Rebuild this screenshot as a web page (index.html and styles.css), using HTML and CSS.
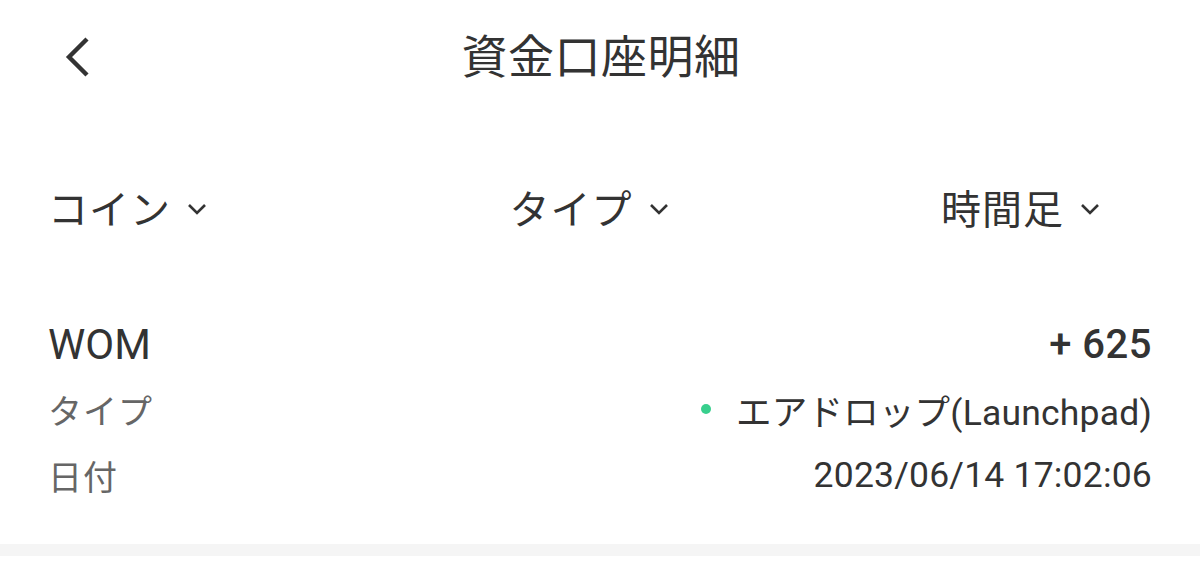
FILE: index.html
```html
<!DOCTYPE html>
<html>
<head>
    <meta charset="utf-8">
    <meta name="viewport" content="width=device-width, initial-scale=1">
    <title>資金口座明細</title>
    <link rel="stylesheet" href="styles.css">
</head>
<body>
    <div class="header">
        <button class="back" aria-label="戻る">
            <svg width="28" height="42" viewBox="0 0 28 42">
                <polyline points="23,3 5,21 23,39" fill="none" stroke="#333" stroke-width="4.4" stroke-linejoin="miter"/>
            </svg>
        </button>
        <div class="title">資金口座明細</div>
        <div></div>
    </div>

    <div class="filters">
        <div class="filter left">コイン
            <svg class="caret" width="20" height="13" viewBox="0 0 20 13"><polyline points="2,2 10,10 18,2" fill="none" stroke="#333" stroke-width="2.6"/></svg>
        </div>
        <div class="filter middle">タイプ
            <svg class="caret" width="20" height="13" viewBox="0 0 20 13"><polyline points="2,2 10,10 18,2" fill="none" stroke="#333" stroke-width="2.6"/></svg>
        </div>
        <div class="filter right">時間足
            <svg class="caret" width="20" height="13" viewBox="0 0 20 13"><polyline points="2,2 10,10 18,2" fill="none" stroke="#333" stroke-width="2.6"/></svg>
        </div>
    </div>

    <div class="record">
        <div class="row head">
            <span class="coin">WOM</span>
            <span class="amount">+ 625</span>
        </div>
        <div class="row">
            <span class="label">タイプ</span>
            <span class="value"><i class="dot"></i>エアドロップ(Launchpad)</span>
        </div>
        <div class="row">
            <span class="label">日付</span>
            <span class="value">2023/06/14 17:02:06</span>
        </div>
    </div>
    <div class="divider"></div>
</body>
</html>
```

FILE: styles.css
```css
body {
    margin: 0;
    background-color: #fff;
    color: #333;
    font-family: Roboto, "Noto Sans CJK JP", sans-serif;
}
.header {
    display: grid;
    grid-template-columns: 1fr auto 1fr;
    align-items: center;
    height: 112px;
    padding: 0 48px 0 64px;
}
.back {
    justify-self: start;
    background: none;
    border: none;
    padding: 0;
    display: flex;
    margin-top: 2px;
}
.title {
    font-size: 46px;
    letter-spacing: 0.5px;
    margin-left: -14px;
    margin-top: -7px;
}
.filters {
    display: grid;
    grid-template-columns: 1fr auto 1fr;
    align-items: center;
    height: 190px;
    padding: 0 100px 0 48px;
}
.filter {
    display: flex;
    align-items: center;
    font-size: 40px;
    letter-spacing: 1px;
}
.filter.left {
    justify-self: start;
}
.filter.middle {
    margin-left: 30px;
}
.filter.right {
    justify-self: end;
}
.caret {
    margin-left: 16px;
    margin-top: 4px;
}
.record {
    padding: 12px 48px 36px 48px;
}
.row {
    display: flex;
    justify-content: space-between;
    align-items: center;
    height: 66px;
    font-size: 35.5px;
}
.row.head {
    height: 60px;
    font-size: 40px;
    margin-bottom: 2px;
}
.coin {
    font-size: 42px;
}
.amount {
    font-weight: 500;
    letter-spacing: 0.5px;
}
.label {
    color: #666;
    font-size: 34px;
    letter-spacing: 1px;
}
.value {
    display: flex;
    align-items: center;
    letter-spacing: 0.2px;
}
.dot {
    width: 10px;
    height: 10px;
    border-radius: 50%;
    background-color: #38cf8d;
    margin-right: 25px;
}
.divider {
    height: 12px;
    background-color: #f5f5f5;
}
```
